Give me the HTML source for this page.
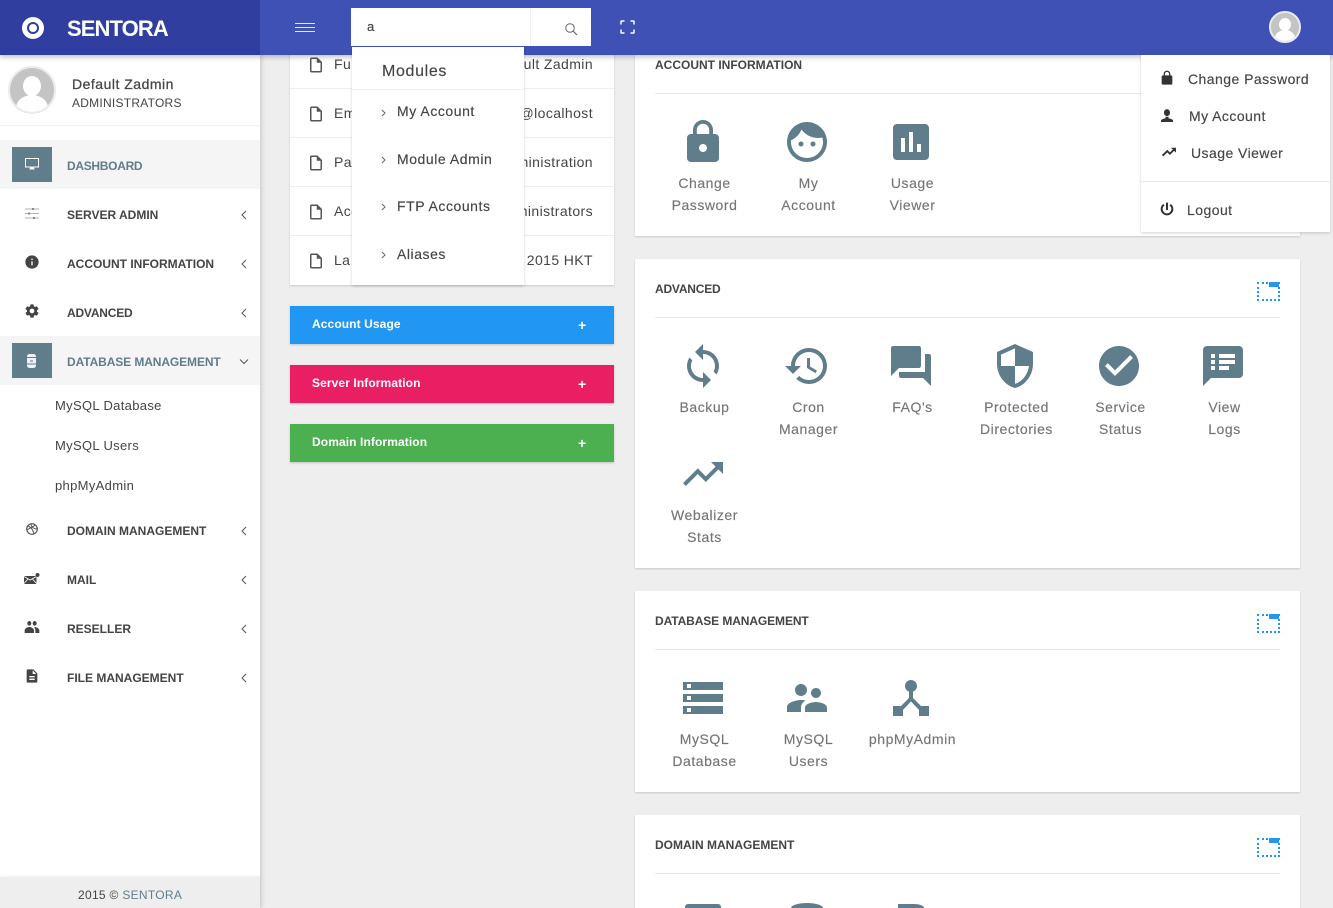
<!DOCTYPE html>
<html lang="en"><head><meta charset="utf-8"><title>Sentora</title>
<style>
html,body{margin:0;padding:0;width:1333px;height:908px;overflow:hidden;background:#eee;font-family:"Liberation Sans",Arial,sans-serif;color:#444}
body{position:relative}
div,span,svg{position:absolute}
.t{white-space:nowrap;line-height:20px;height:20px}
.c{transform:translateX(-50%);text-align:center}
.card{background:#fff;box-shadow:0 1px 2px rgba(0,0,0,.16)}
.n{left:67px;font-size:12px;font-weight:700;color:#444}
.ch{left:240px;width:8px;height:10px}
.sub{left:55px;font-size:13px;letter-spacing:.33px;color:#444}
.h{left:655px;font-size:12px;font-weight:700;color:#444}
.hr{left:655px;width:625px;height:1px;background:#e6e6e6}
.l{font-size:14px;letter-spacing:.55px;color:#757575;-webkit-text-stroke:.15px #757575}
.ic{width:48px;height:48px;fill:#607d8b}
.s{width:16px;height:16px;fill:#444}
.row{left:290px;width:324px;height:1px;background:#eee}
.rt{font-size:14px;letter-spacing:.4px;color:#444}
.lft{left:334px}
.rgt{right:740px}
.f{left:307px;width:18px;height:18px;fill:#555}
.bar{left:290px;width:324px;height:38px;box-shadow:0 1px 2px rgba(0,0,0,.18)}
.bt{left:312px;font-size:12px;font-weight:700;color:#fff;letter-spacing:.1px}
.bp{left:578px;font-size:14px;font-weight:700;color:#fff}
.dd{font-size:14px;letter-spacing:.55px;color:#444;-webkit-text-stroke:.15px #444}
.ar{left:381px;width:5px;height:8px}
.um{font-size:14px;letter-spacing:.45px;color:#444;-webkit-text-stroke:.15px #444}
.pi{left:1257px;width:19px;height:15px;border:2px dotted #2196f3}
.pf{left:1269px;width:10px;height:5px;background:#2196f3}
</style></head><body>

<!-- LEFT COLUMN -->
<div class="card" style="left:290px;top:40px;width:324px;height:245px"></div>
<div class="row" style="top:88px"></div><div class="row" style="top:137px"></div><div class="row" style="top:186px"></div><div class="row" style="top:235px"></div>
<svg class="f" style="top:56px" viewBox="0 0 24 24"><path d="M14 2H6c-1.1 0-2 .9-2 2v16c0 1.1.9 2 2 2h12c1.1 0 2-.9 2-2V8l-6-6zm4 18H6V4h7v5h5v11z"/></svg>
<svg class="f" style="top:105px" viewBox="0 0 24 24"><path d="M14 2H6c-1.1 0-2 .9-2 2v16c0 1.1.9 2 2 2h12c1.1 0 2-.9 2-2V8l-6-6zm4 18H6V4h7v5h5v11z"/></svg>
<svg class="f" style="top:154px" viewBox="0 0 24 24"><path d="M14 2H6c-1.1 0-2 .9-2 2v16c0 1.1.9 2 2 2h12c1.1 0 2-.9 2-2V8l-6-6zm4 18H6V4h7v5h5v11z"/></svg>
<svg class="f" style="top:203px" viewBox="0 0 24 24"><path d="M14 2H6c-1.1 0-2 .9-2 2v16c0 1.1.9 2 2 2h12c1.1 0 2-.9 2-2V8l-6-6zm4 18H6V4h7v5h5v11z"/></svg>
<svg class="f" style="top:252px" viewBox="0 0 24 24"><path d="M14 2H6c-1.1 0-2 .9-2 2v16c0 1.1.9 2 2 2h12c1.1 0 2-.9 2-2V8l-6-6zm4 18H6V4h7v5h5v11z"/></svg>
<span class="t rt lft" style="top:54px">Full Name</span><span class="t rt rgt" style="top:54px">Default Zadmin</span>
<span class="t rt lft" style="top:103px">Email</span><span class="t rt rgt" style="top:103px">zadmin@localhost</span>
<span class="t rt lft" style="top:152px">Package</span><span class="t rt rgt" style="top:152px">Administration</span>
<span class="t rt lft" style="top:201px">Account</span><span class="t rt rgt" style="top:201px">Administrators</span>
<span class="t rt lft" style="top:250px;width:17px;overflow:hidden">Last</span><span class="t rt rgt" style="top:250px">2015 HKT</span>

<div class="bar" style="top:306px;background:#2196f3"></div><span class="t bt" style="top:314px">Account Usage</span><span class="t bp" style="top:315px">+</span>
<div class="bar" style="top:365px;background:#e91e63"></div><span class="t bt" style="top:373px">Server Information</span><span class="t bp" style="top:374px">+</span>
<div class="bar" style="top:424px;background:#4caf50"></div><span class="t bt" style="top:432px">Domain Information</span><span class="t bp" style="top:433px">+</span>

<!-- RIGHT COLUMN: account -->
<div class="card" style="left:635px;top:40px;width:665px;height:196px"></div>
<span class="t h" style="top:55px">ACCOUNT INFORMATION</span><div class="hr" style="top:93px"></div>
<svg class="ic" style="left:679px;top:118px" viewBox="0 0 24 24"><path d="M18 8h-1V6c0-2.76-2.24-5-5-5S7 3.24 7 6v2H6c-1.1 0-2 .9-2 2v10c0 1.1.9 2 2 2h12c1.1 0 2-.9 2-2V10c0-1.1-.9-2-2-2zm-6 9c-1.1 0-2-.9-2-2s.9-2 2-2 2 .9 2 2-.9 2-2 2zm3.1-9H8.9V6c0-1.71 1.39-3.1 3.1-3.1 1.71 0 3.1 1.39 3.1 3.1v2z"/></svg>
<svg class="ic" style="left:783px;top:118px" viewBox="0 0 24 24"><path d="M9 11.75c-.69 0-1.25.56-1.25 1.25s.56 1.25 1.25 1.25 1.25-.56 1.25-1.25-.56-1.25-1.25-1.25zm6 0c-.69 0-1.25.56-1.25 1.25s.56 1.25 1.25 1.25 1.25-.56 1.25-1.25-.56-1.25-1.25-1.25zM12 2C6.48 2 2 6.48 2 12s4.48 10 10 10 10-4.48 10-10S17.52 2 12 2zm0 18c-4.41 0-8-3.59-8-8 0-.29.02-.58.05-.86 2.36-1.05 4.23-2.98 5.21-5.37C11.07 8.33 14.05 10 17.42 10c.78 0 1.53-.09 2.25-.26.21.71.33 1.47.33 2.26 0 4.41-3.59 8-8 8z"/></svg>
<svg class="ic" style="left:887px;top:118px" viewBox="0 0 24 24"><path d="M19 3H5c-1.1 0-2 .9-2 2v14c0 1.1.9 2 2 2h14c1.1 0 2-.9 2-2V5c0-1.1-.9-2-2-2zM9 17H7v-7h2v7zm4 0h-2V7h2v10zm4 0h-2v-4h2v4z"/></svg>
<span class="t l c" style="left:704.5px;top:173px">Change</span><span class="t l c" style="left:704.5px;top:195px">Password</span>
<span class="t l c" style="left:808.5px;top:173px">My</span><span class="t l c" style="left:808.5px;top:195px">Account</span>
<span class="t l c" style="left:912.5px;top:173px">Usage</span><span class="t l c" style="left:912.5px;top:195px">Viewer</span>

<!-- advanced -->
<div class="card" style="left:635px;top:259px;width:665px;height:309px"></div>
<span class="t h" style="top:279px;letter-spacing:-.2px">ADVANCED</span><div class="hr" style="top:317px"></div>
<div class="pi" style="top:282px"></div><div class="pf" style="top:282px"></div>
<svg class="ic" style="left:679px;top:342px" viewBox="0 0 24 24"><path d="M12 4V1L8 5l4 4V6c3.31 0 6 2.69 6 6 0 1.01-.25 1.97-.7 2.8l1.46 1.46C19.54 15.03 20 13.57 20 12c0-4.42-3.58-8-8-8zm0 14c-3.31 0-6-2.69-6-6 0-1.01.25-1.97.7-2.8L5.24 7.74C4.46 8.97 4 10.43 4 12c0 4.42 3.58 8 8 8v3l4-4-4-4v3z"/></svg>
<svg class="ic" style="left:783px;top:342px" viewBox="0 0 24 24"><path d="M13 3c-4.97 0-9 4.03-9 9H1l3.89 3.89.07.14L9 12H6c0-3.87 3.13-7 7-7s7 3.13 7 7-3.13 7-7 7c-1.93 0-3.68-.79-4.94-2.06l-1.42 1.42C8.27 19.99 10.51 21 13 21c4.97 0 9-4.03 9-9s-4.03-9-9-9zm-1 5v5l4.28 2.54.72-1.21-3.5-2.08V8H12z"/></svg>
<svg class="ic" style="left:887px;top:342px" viewBox="0 0 24 24"><path d="M21 6h-2v9H6v2c0 .55.45 1 1 1h11l4 4V7c0-.55-.45-1-1-1zm-4 6V3c0-.55-.45-1-1-1H3c-.55 0-1 .45-1 1v14l4-4h10c.55 0 1-.45 1-1z"/></svg>
<svg class="ic" style="left:991px;top:342px" viewBox="0 0 24 24"><path d="M12 1L3 5v6c0 5.55 3.84 10.74 9 12 5.16-1.26 9-6.45 9-12V5l-9-4zm0 10.99h7c-.53 4.12-3.28 7.79-7 8.94V12H5V6.3l7-3.11v8.8z"/></svg>
<svg class="ic" style="left:1095px;top:342px" viewBox="0 0 24 24"><path d="M12 2C6.48 2 2 6.48 2 12s4.48 10 10 10 10-4.48 10-10S17.52 2 12 2zm-2 15l-5-5 1.41-1.41L10 14.17l7.59-7.59L19 8l-9 9z"/></svg>
<svg class="ic" style="left:1199px;top:342px" viewBox="0 0 24 24"><path d="M20 2H4c-1.1 0-1.99.9-1.99 2L2 22l4-4h14c1.1 0 2-.9 2-2V4c0-1.1-.9-2-2-2zM8 14H6v-2h2v2zm0-3H6V9h2v2zm0-3H6V6h2v2zm7 6h-5v-2h5v2zm3-3h-8V9h8v2zm0-3h-8V6h8v2z"/></svg>
<svg class="ic" style="left:679px;top:450px" viewBox="0 0 24 24"><path d="M16 6l2.29 2.29-4.88 4.88-4-4L2 16.59 3.41 18l6-6 4 4 6.3-6.29L22 12V6z"/></svg>
<span class="t l c" style="left:704.5px;top:397px">Backup</span>
<span class="t l c" style="left:808.5px;top:397px">Cron</span><span class="t l c" style="left:808.5px;top:419px">Manager</span>
<span class="t l c" style="left:912.5px;top:397px">FAQ's</span>
<span class="t l c" style="left:1016.5px;top:397px">Protected</span><span class="t l c" style="left:1016.5px;top:419px">Directories</span>
<span class="t l c" style="left:1120.5px;top:397px">Service</span><span class="t l c" style="left:1120.5px;top:419px">Status</span>
<span class="t l c" style="left:1224.5px;top:397px">View</span><span class="t l c" style="left:1224.5px;top:419px">Logs</span>
<span class="t l c" style="left:704.5px;top:505px">Webalizer</span><span class="t l c" style="left:704.5px;top:527px">Stats</span>

<!-- database -->
<div class="card" style="left:635px;top:591px;width:665px;height:201px"></div>
<span class="t h" style="top:611px;letter-spacing:-.1px">DATABASE MANAGEMENT</span><div class="hr" style="top:649px"></div>
<div class="pi" style="top:614px"></div><div class="pf" style="top:614px"></div>
<svg class="ic" style="left:679px;top:674px" viewBox="0 0 24 24"><path d="M2 20h20v-4H2v4zm2-3h2v2H4v-2zM2 4v4h20V4H2zm4 3H4V5h2v2zm-4 7h20v-4H2v4zm2-3h2v2H4v-2z"/></svg>
<svg class="ic" style="left:783px;top:674px" viewBox="0 0 24 24"><path d="M16.5 12c1.38 0 2.49-1.12 2.49-2.5S17.88 7 16.5 7C15.12 7 14 8.12 14 9.5s1.12 2.5 2.5 2.5zM9 11c1.66 0 2.99-1.34 2.99-3S10.66 5 9 5C7.34 5 6 6.34 6 8s1.34 3 3 3zm7.5 3c-1.83 0-5.5.92-5.5 2.75V19h11v-2.25c0-1.83-3.67-2.75-5.5-2.75zM9 13c-2.33 0-7 1.17-7 3.5V19h7v-2.25c0-.85.33-2.34 2.37-3.47C10.5 13.1 9.66 13 9 13z"/></svg>
<svg class="ic" style="left:887px;top:674px" viewBox="0 0 24 24"><path d="M17 16l-4-4V8.82C14.16 8.4 15 7.3 15 6c0-1.66-1.34-3-3-3S9 4.34 9 6c0 1.3.84 2.4 2 2.82V12l-4 4H3v5h5v-3.05l4-4.2 4 4.2V21h5v-5h-4z"/></svg>
<span class="t l c" style="left:704.5px;top:729px">MySQL</span><span class="t l c" style="left:704.5px;top:751px">Database</span>
<span class="t l c" style="left:808.5px;top:729px">MySQL</span><span class="t l c" style="left:808.5px;top:751px">Users</span>
<span class="t l c" style="left:912.5px;top:729px">phpMyAdmin</span>

<!-- domain -->
<div class="card" style="left:635px;top:815px;width:665px;height:93px"></div>
<span class="t h" style="top:835px">DOMAIN MANAGEMENT</span><div class="hr" style="top:873px"></div>
<div class="pi" style="top:838px"></div><div class="pf" style="top:838px"></div>
<div style="left:685px;top:904px;width:36px;height:4px;border-radius:3px 3px 0 0;background:#607d8b"></div>
<div style="left:791px;top:903px;width:32px;height:5px;border-radius:16px 16px 0 0/5px 5px 0 0;background:#607d8b"></div>
<div style="left:898px;top:904px;width:26px;height:4px;border-radius:0 10px 0 0/0 4px 0 0;background:#607d8b"></div>

<!-- SIDEBAR -->
<div style="left:0;top:55px;width:260px;height:853px;background:#fff;box-shadow:1px 0 5px rgba(0,0,0,.18)"></div>
<div style="left:8px;top:66px;width:44px;height:44px;border:2px solid #ececec;border-radius:50%;background:#c4c4c4;overflow:hidden">
 <div style="left:13px;top:8px;width:18px;height:20px;border-radius:50%;background:#fff"></div>
 <div style="left:6px;top:27px;width:32px;height:26px;border-radius:50%;background:#fff"></div>
</div>
<span class="t" style="left:72px;top:74px;font-size:14px;letter-spacing:.5px;color:#444;-webkit-text-stroke:.25px #444">Default Zadmin</span>
<span class="t" style="left:72px;top:93px;font-size:12px;letter-spacing:.25px;color:#444">ADMINISTRATORS</span>
<div style="left:0;top:125px;width:260px;height:1px;background:#f1f1f1"></div>

<div style="left:0;top:140px;width:260px;height:49px;background:#f5f5f5"></div>
<div style="left:12px;top:147px;width:40px;height:35px;background:#607d8b"></div>
<svg style="left:25px;top:158px;width:14px;height:12px" viewBox="0 0 14 12"><rect x=".5" y=".5" width="13" height="8.500" fill="none" stroke="#fff"/><path d="M4 11.500h6L8.500 9.500h-3z" fill="#fff"/></svg>
<span class="t n" style="top:156px;color:#607d8b;letter-spacing:-.3px">DASHBOARD</span>

<svg style="left:25px;top:208px;width:14px;height:11px" viewBox="0 0 14 11"><path d="M0 1h14M0 5.500h14M0 10h14" stroke="#999" stroke-width=".8"/><path d="M8 0v2M4 4.500v2M9 9v2" stroke="#555" stroke-width="1.200"/></svg>
<span class="t n" style="top:205px">SERVER ADMIN</span>
<svg class="s" style="left:24px;top:254px" viewBox="0 0 24 24"><path d="M12 2C6.48 2 2 6.48 2 12s4.48 10 10 10 10-4.48 10-10S17.52 2 12 2zm1 15h-2v-6h2v6zm0-8h-2V7h2v2z"/></svg>
<span class="t n" style="top:254px">ACCOUNT INFORMATION</span>
<svg class="s" style="left:24px;top:303px" viewBox="0 0 24 24"><path d="M19.43 12.98c.04-.32.07-.64.07-.98s-.03-.66-.07-.98l2.11-1.65c.19-.15.24-.42.12-.64l-2-3.46c-.12-.22-.39-.3-.61-.22l-2.49 1c-.52-.4-1.08-.73-1.69-.98l-.38-2.65C14.46 2.18 14.25 2 14 2h-4c-.25 0-.46.18-.49.42l-.38 2.65c-.61.25-1.17.59-1.69.98l-2.49-1c-.23-.09-.49 0-.61.22l-2 3.46c-.13.22-.07.49.12.64l2.11 1.65c-.04.32-.07.65-.07.98s.03.66.07.98l-2.11 1.65c-.19.15-.24.42-.12.64l2 3.46c.12.22.39.3.61.22l2.49-1c.52.4 1.08.73 1.69.98l.38 2.65c.03.24.24.42.49.42h4c.25 0 .46-.18.49-.42l.38-2.65c.61-.25 1.17-.59 1.69-.98l2.49 1c.23.09.49 0 .61-.22l2-3.46c.12-.22.07-.49-.12-.64l-2.11-1.65zM12 15.500c-1.93 0-3.500-1.57-3.500-3.500s1.57-3.500 3.500-3.500 3.500 1.57 3.500 3.500-1.57 3.500-3.500 3.500z"/></svg>
<span class="t n" style="top:303px;letter-spacing:-.2px">ADVANCED</span>

<div style="left:0;top:336px;width:260px;height:49px;background:#f5f5f5"></div>
<div style="left:12px;top:343px;width:40px;height:35px;background:#607d8b"></div>
<svg style="left:27px;top:354px;width:9px;height:14px" viewBox="0 0 9 14"><rect x="0" y="0" width="9" height="14" rx="2.500" fill="#f0f2f3"/><path d="M0 3.500h9M0 10h9M3 7h3" stroke="#607d8b" stroke-width="1"/></svg>
<span class="t n" style="top:352px;color:#607d8b;letter-spacing:-.1px">DATABASE MANAGEMENT</span>
<span class="t sub" style="top:396px">MySQL Database</span>
<span class="t sub" style="top:436px">MySQL Users</span>
<span class="t sub" style="top:476px">phpMyAdmin</span>

<svg style="left:26px;top:523px;width:12px;height:12px" viewBox="0 0 12 12"><circle cx="6" cy="6" r="5.300" fill="none" stroke="#555" stroke-width="1.200"/><path d="M2 3c3 1 5 4 6 8M1 7c3-2 6-3 8-5M5 1c0 3 3 5 6 5" fill="none" stroke="#555" stroke-width="1"/></svg>
<span class="t n" style="top:521px">DOMAIN MANAGEMENT</span>
<svg style="left:24px;top:573px;width:16px;height:11px" viewBox="0 0 16 11"><path d="M0 3h12.500v8H0z" fill="#444"/><path d="M0 3.500l6.200 3.500 6.300-3.500M0 10.500l4-4.500M12.500 10.500L8.500 6" fill="none" stroke="#fff" stroke-width=".8"/><circle cx="13.500" cy="2" r="2" fill="#444"/></svg>
<span class="t n" style="top:570px">MAIL</span>
<svg class="s" style="left:24px;top:619px" viewBox="0 0 24 24"><path d="M16 10c1.660 0 2.990-1.800 2.990-3.500S17.660 3 16 3c-1.660 0-3 1.800-3 3.500s1.340 3.500 3 3.500zM8 10c1.660 0 2.990-1.800 2.990-3.500S9.660 3 8 3C6.340 3 5 4.800 5 6.500S6.340 10 8 10zm0 2c-2.330 0-7 2-7 5v4h14v-4c0-3-4.670-5-7-5zm8 0c-.29 0-.62.02-.97.05 1.160.84 1.970 2.500 1.970 4.950v4h6v-4c0-3-4.670-5-7-5z"/></svg>
<span class="t n" style="top:619px">RESELLER</span>
<svg class="s" style="left:24px;top:668px" viewBox="0 0 24 24"><path d="M14 2H6c-1.100 0-1.990.9-1.990 2L4 20c0 1.100.89 2 1.990 2H18c1.100 0 2-.9 2-2V8l-6-6zm2 16H8v-2h8v2zm0-4H8v-2h8v2zm-3-5V3.500L18.500 9H13z"/></svg>
<span class="t n" style="top:668px">FILE MANAGEMENT</span>

<svg class="ch" style="top:210px" viewBox="0 0 8 10"><path d="M6 1L2 5l4 4" fill="none" stroke="#555" stroke-width="1"/></svg>
<svg class="ch" style="top:259px" viewBox="0 0 8 10"><path d="M6 1L2 5l4 4" fill="none" stroke="#555" stroke-width="1"/></svg>
<svg class="ch" style="top:308px" viewBox="0 0 8 10"><path d="M6 1L2 5l4 4" fill="none" stroke="#555" stroke-width="1"/></svg>
<svg style="left:239px;top:358px;width:10px;height:7px" viewBox="0 0 10 7"><path d="M1 1.500l4 4 4-4" fill="none" stroke="#555" stroke-width="1"/></svg>
<svg class="ch" style="top:526px" viewBox="0 0 8 10"><path d="M6 1L2 5l4 4" fill="none" stroke="#555" stroke-width="1"/></svg>
<svg class="ch" style="top:575px" viewBox="0 0 8 10"><path d="M6 1L2 5l4 4" fill="none" stroke="#555" stroke-width="1"/></svg>
<svg class="ch" style="top:624px" viewBox="0 0 8 10"><path d="M6 1L2 5l4 4" fill="none" stroke="#555" stroke-width="1"/></svg>
<svg class="ch" style="top:673px" viewBox="0 0 8 10"><path d="M6 1L2 5l4 4" fill="none" stroke="#555" stroke-width="1"/></svg>

<div style="left:0;top:877px;width:260px;height:31px;background:#eee;box-shadow:0 -1px 2px rgba(0,0,0,.06)"></div>
<span class="t" style="left:78px;top:885px;font-size:12px;letter-spacing:.3px;color:#444">2015 © <span style="position:static;color:#607d8b">SENTORA</span></span>

<!-- HEADER -->
<div style="left:0;top:0;width:1333px;height:55px;background:#3f51b5;box-shadow:0 2px 5px rgba(0,0,0,.25)"></div>
<div style="left:0;top:0;width:260px;height:55px;background:#303f9f"></div>
<div style="left:22px;top:17px;width:22px;height:22px;border-radius:50%;background:#fff"></div>
<div style="left:27px;top:22px;width:8px;height:8px;border:2px solid #303f9f;border-radius:50%"></div>
<span class="t" style="left:67px;top:19px;font-size:22px;font-weight:700;letter-spacing:-.9px;color:#fff">SENTORA</span>
<div style="left:295px;top:23px;width:20px;height:1px;background:#e4e7f5"></div>
<div style="left:295px;top:27px;width:20px;height:1px;background:#e4e7f5"></div>
<div style="left:295px;top:31px;width:20px;height:1px;background:#e4e7f5"></div>

<div style="left:351px;top:8px;width:240px;height:38px;background:#fff"></div>
<div style="left:530px;top:8px;width:1px;height:38px;background:#f1f1f1"></div>
<span class="t" style="left:367px;top:17px;font-size:13px;color:#444;-webkit-text-stroke:.2px #444">a</span>
<svg style="left:564px;top:22px;width:14px;height:14px" viewBox="0 0 14 14"><circle cx="6" cy="6" r="4.300" fill="none" stroke="#666" stroke-width="1"/><path d="M9.200 9.200L13 13" stroke="#666" stroke-width="1.200"/></svg>
<svg style="left:620px;top:20px;width:15px;height:14px" viewBox="0 0 15 14"><path d="M1 4.500V1.500Q1 1 1.500 1H4.500M10.500 1h3q.5 0 .5.500v3M14 9.500v3q0 .5-.5.500h-3M4.500 13h-3q-.5 0-.5-.5v-3" fill="none" stroke="#fff" stroke-width="1.500"/></svg>
<div style="left:1269px;top:11px;width:28px;height:28px;border:2px solid #e8eaf6;border-radius:50%;background:#c4c4c4;overflow:hidden">
 <div style="left:8px;top:5px;width:12px;height:13px;border-radius:50%;background:#fff"></div>
 <div style="left:4px;top:17px;width:20px;height:16px;border-radius:50%;background:#fff"></div>
</div>

<!-- SEARCH DROPDOWN -->
<div style="left:352px;top:47px;width:172px;height:238px;background:#fff;box-shadow:0 1px 3px rgba(0,0,0,.18)"></div>
<span class="t" style="left:382px;top:62px;font-size:16px;letter-spacing:.65px;color:#444;-webkit-text-stroke:.15px #444">Modules</span>
<div style="left:352px;top:89px;width:172px;height:1px;background:#eee"></div>
<svg class="ar" style="top:109px" viewBox="0 0 5 8"><path d="M1 1l3 3-3 3" fill="none" stroke="#666"/></svg>
<svg class="ar" style="top:156px" viewBox="0 0 5 8"><path d="M1 1l3 3-3 3" fill="none" stroke="#666"/></svg>
<svg class="ar" style="top:203px" viewBox="0 0 5 8"><path d="M1 1l3 3-3 3" fill="none" stroke="#666"/></svg>
<svg class="ar" style="top:251px" viewBox="0 0 5 8"><path d="M1 1l3 3-3 3" fill="none" stroke="#666"/></svg>
<span class="t dd" style="left:397px;top:101px">My Account</span>
<span class="t dd" style="left:397px;top:149px">Module Admin</span>
<span class="t dd" style="left:397px;top:196px">FTP Accounts</span>
<span class="t dd" style="left:397px;top:244px">Aliases</span>

<!-- USER DROPDOWN -->
<div style="left:1141px;top:55px;width:189px;height:177px;background:#fff;box-shadow:0 1px 3px rgba(0,0,0,.18)"></div>
<svg class="s" style="left:1159px;top:70px;fill:#333" viewBox="0 0 24 24"><path d="M18 8h-1V6c0-2.760-2.240-5-5-5S7 3.240 7 6v2H6c-1.100 0-2 .9-2 2v10c0 1.100.9 2 2 2h12c1.100 0 2-.9 2-2V10c0-1.100-.9-2-2-2zM15.100 8H8.900V6c0-1.710 1.390-3.100 3.100-3.100 1.710 0 3.100 1.390 3.100 3.100v2z"/></svg>
<svg style="left:1158px;top:107px;width:18px;height:18px;fill:#333" viewBox="0 0 24 24"><path d="M12 12c2.210 0 4-1.790 4-4.500S14.210 3 12 3 8 4.790 8 7.500 9.790 12 12 12zm-2 1v2c-2 .5-6 1.500-6 3v2h16v-2c0-1.500-4-2.500-6-3v-2z"/></svg>
<svg class="s" style="left:1161px;top:144px;fill:#333;stroke:#333;stroke-width:.8" viewBox="0 0 24 24"><path d="M16 6l2.290 2.290-4.880 4.880-4-4L2 16.590 3.410 18l6-6 4 4 6.300-6.290L22 12V6z"/></svg>
<svg class="s" style="left:1159px;top:201px;fill:#333;stroke:#333;stroke-width:1" viewBox="0 0 24 24"><path d="M13 3h-2v10h2V3zm4.830 2.170l-1.420 1.420C17.990 7.860 19 9.810 19 12c0 3.870-3.130 7-7 7s-7-3.130-7-7c0-2.190 1.010-4.140 2.580-5.420L6.170 5.170C4.230 6.820 3 9.260 3 12c0 4.970 4.030 9 9 9s9-4.030 9-9c0-2.740-1.230-5.180-3.170-6.830z"/></svg>
<span class="t um" style="left:1188px;top:69px">Change Password</span>
<span class="t um" style="left:1189px;top:106px">My Account</span>
<span class="t um" style="left:1191px;top:143px">Usage Viewer</span>
<div style="left:1141px;top:181px;width:189px;height:1px;background:#e8e8e8"></div>
<span class="t um" style="left:1187px;top:200px">Logout</span>
</body></html>
